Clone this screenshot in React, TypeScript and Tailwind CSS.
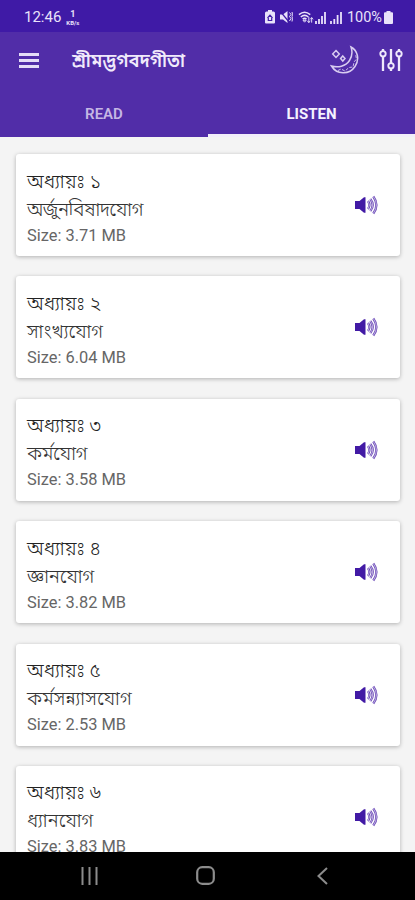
type Chapter = {
  number: string;
  title: string;
  size: string;
  tracking?: string;
};

const chapters: Chapter[] = [
  { number: '১', title: 'অর্জুনবিষাদযোগ', size: '3.71', tracking: 'tracking-[-0.5px]' },
  { number: '২', title: 'সাংখ্যযোগ', size: '6.04' },
  { number: '৩', title: 'কর্মযোগ', size: '3.58', tracking: 'tracking-[-0.2px]' },
  { number: '৪', title: 'জ্ঞানযোগ', size: '3.82', tracking: 'tracking-[-0.2px]' },
  { number: '৫', title: 'কর্মসন্ন্যাসযোগ', size: '2.53', tracking: 'tracking-[0.1px]' },
  { number: '৬', title: 'ধ্যানযোগ', size: '3.83' },
];

const StatusBar = () => (
  <div className="flex h-8 shrink-0 items-center justify-between bg-[#3f1aa6] pl-6 pr-[22px] pt-[2px] text-[#e9e2fa]">
    <div className="flex items-center gap-[5px]">
      <span className="text-[15px] leading-none">12:46</span>
      <div className="flex flex-col items-center">
        <span className="text-[9px] font-bold leading-[10px]">1</span>
        <span className="text-[6px] font-bold leading-[7px]">KB/s</span>
      </div>
    </div>
    <div className="flex items-center">
      <svg width="10" height="14" viewBox="0 0 10 14" className="mr-[5px]">
        <path d="M3 0h4v1.500h1.500Q10 1.500 10 3v9.500q0 1-1 1H1q-1 0-1-1V3q0-1.500 1.500-1.500H3z" fill="currentColor" />
        <path d="M2.500 8 5 5.200 7.500 8M3.300 8v2.500h3.400V8" fill="none" stroke="#3f1aa6" strokeWidth="1.200" />
      </svg>
      <svg width="13" height="14" viewBox="0 0 13 14" className="mr-[5px]">
        <path d="M0 4.500h3L7.500 1v12L3 9.500H0z" fill="currentColor" />
        <path d="M0 1l9 11" stroke="#3f1aa6" strokeWidth="1.200" />
        <path d="M9.500 2.500l1.500 2-1.500 2 1.500 2-1.500 2.500M12 2l.5 2.500-.5 2 .5 2-.5 3" fill="none" stroke="currentColor" />
      </svg>
      <svg width="16" height="14" viewBox="0 0 17 14" className="mr-[1px]">
        <path d="M1 4.500Q7 -.5 13 4.500M3 7q4-3.300 8 0M5 9.300q2-1.700 4 0" fill="none" stroke="currentColor" strokeWidth="1.700" />
        <path d="M7 12.500 5.300 10.500h3.400zM11.500 7v6M9.800 11l1.700 2 1.500-2M14.500 13V8M13 9.500 14.500 7.500 16 9.500" fill="none" stroke="currentColor" />
      </svg>
      <svg width="11" height="13" viewBox="0 0 11 13" className="mr-[4px]">
        <path d="M1 10v3M4 8v5M7 5v8M10 1v12" stroke="currentColor" strokeWidth="1.800" />
      </svg>
      <svg width="12" height="13" viewBox="0 0 12 13" className="mr-[5px]">
        <path d="M1 10v3M4.300 8v5M7.600 4v9M11 1v12" stroke="currentColor" strokeWidth="1.800" />
      </svg>
      <span className="pt-[2px] text-[14.500px] leading-none">100%</span>
      <svg width="9" height="13" viewBox="0 0 9 13" className="ml-[2px]">
        <path d="M2.500 0h4v1.300H8q1 0 1 1V12q0 1-1 1H1q-1 0-1-1V2.300q0-1 1-1h1.500z" fill="currentColor" />
      </svg>
    </div>
  </div>
);

const MoonIcon = () => (
  <svg width="30" height="30" viewBox="0 0 30 30" fill="none" stroke="#d9cdf1" strokeWidth="1.500">
    <path d="M21 2C27.500 5.500 30 14 25 21.500 19 30.500 6.500 29.500 1.500 21 8 23 15.500 21.500 19.500 15.500 22.500 11 22.500 6.500 21 2Z" />
    <path d="M8 25.500l3-1.500 4 2 4-3.500 4-.5 1-5 2.500-3-1-5" strokeWidth=".9" strokeDasharray="3 1.500" />
    <path d="M6 5.500l3.300 3.500L6 12.500 2.700 9zM12.800 11l2.200 2.500-2.200 2.500-2.200-2.500z" />
  </svg>
);

const EqualizerIcon = () => (
  <svg width="24" height="24" viewBox="0 0 24 24" fill="none" stroke="#eee8fb" strokeWidth="2.300">
    <path d="M4 1v2M4 8.500V23M12 1v14M12 20.500V23M20 1v2M20 8.500V23" />
    <circle cx="4" cy="5.800" r="2.700" strokeWidth="1.900" />
    <circle cx="12" cy="17.800" r="2.700" strokeWidth="1.900" />
    <circle cx="20" cy="5.800" r="2.700" strokeWidth="1.900" />
  </svg>
);

const SpeakerIcon = () => (
  <svg width="24" height="20" viewBox="0 0 24 20" fill="none">
    <path d="M0 6h4.500L9 2.200h1.500v15.600H9L4.500 14H0z" fill="#421aa5" />
    <path d="M13 6q2.800 4 0 8M15.300 4q4.800 6 0 12M18.300 1.500q6.200 8.500 0 17" stroke="#6846b6" strokeWidth="2.300" />
    <path d="M13 6q2.800 4 0 8M15.300 4q4.800 6 0 12M18.300 1.500q6.200 8.500 0 17" stroke="#e4ddf3" strokeWidth=".7" />
  </svg>
);

const Header = () => (
  <header className="shrink-0 bg-[#512da8]">
    <div className="flex h-14 items-center pl-[19px] pr-[11px]">
      <div className="flex w-5 flex-col gap-[3px]">
        <span className="h-[3px] bg-[#e5ddf7]" />
        <span className="h-[3px] bg-[#e5ddf7]" />
        <span className="h-[3px] bg-[#e5ddf7]" />
      </div>
      <h1 className="ml-[33px] grow whitespace-nowrap pt-[2px] text-[18.300px] font-semibold leading-none text-[#f0eafb]">শ্রীমদ্ভগবদগীতা</h1>
      <MoonIcon />
      <div className="ml-[19px] mr-px">
        <EqualizerIcon />
      </div>
    </div>
    <div className="flex h-[49px] text-[15px]">
      <div className="flex w-[208px] items-center justify-center pt-[4px] font-semibold text-[#c5b7e4]">READ</div>
      <div className="flex grow items-center justify-center border-b-[3px] border-[#f2eefa] pt-[7px] font-bold text-[#f6f2ff]">LISTEN</div>
    </div>
  </header>
);

const ChapterCard = ({ chapter }: { chapter: Chapter }) => (
  <div className="flex h-[102px] shrink-0 items-center justify-between rounded-[3px] bg-white pl-[11px] pr-[21px] shadow-[0_1px_4px_rgba(0,0,0,0.28)]">
    <div className="whitespace-nowrap pt-[5px]">
      <p className="h-7 text-[19.400px] font-light leading-7 text-[#222]">অধ্যায়ঃ {chapter.number}</p>
      <p className={`h-7 text-[19px] font-light leading-7 text-[#333] ${chapter.tracking ?? ''}`}>{chapter.title}</p>
      <p className="h-6 text-[16.400px] leading-6 text-[#666]">Size: {chapter.size} MB</p>
    </div>
    <SpeakerIcon />
  </div>
);

const NavBar = () => (
  <div className="flex h-12 shrink-0 items-center bg-black pb-[1px] pl-[81px]">
    <svg width="17" height="18" viewBox="0 0 17 18" stroke="#8c8c8c" strokeWidth="2">
      <path d="M1.500 0v18M8.500 0v18M15.500 0v18" />
    </svg>
    <svg width="19" height="19" viewBox="0 0 19 19" fill="none" stroke="#8c8c8c" strokeWidth="2.200" className="ml-[98px]">
      <rect x="1.200" y="1.200" width="16.600" height="16.600" rx="5" />
    </svg>
    <svg width="11" height="18" viewBox="0 0 11 18" fill="none" stroke="#8c8c8c" strokeWidth="2" className="ml-[102px]">
      <path d="M10 1 1.500 9l8.500 8" />
    </svg>
  </div>
);

const App = () => {
  return (
    <div className="flex h-[900px] w-[415px] flex-col overflow-hidden bg-[#f4f4f4] font-['Roboto','Noto_Sans_Bengali','Noto_Sans',sans-serif]">
      <StatusBar />
      <Header />
      <main className="flex min-h-0 grow flex-col gap-[20.400px] overflow-hidden pl-4 pt-[17px] pr-[15px]">
        {chapters.map((chapter) => (
          <ChapterCard key={chapter.number} chapter={chapter} />
        ))}
      </main>
      <NavBar />
    </div>
  );
};

export default App;
